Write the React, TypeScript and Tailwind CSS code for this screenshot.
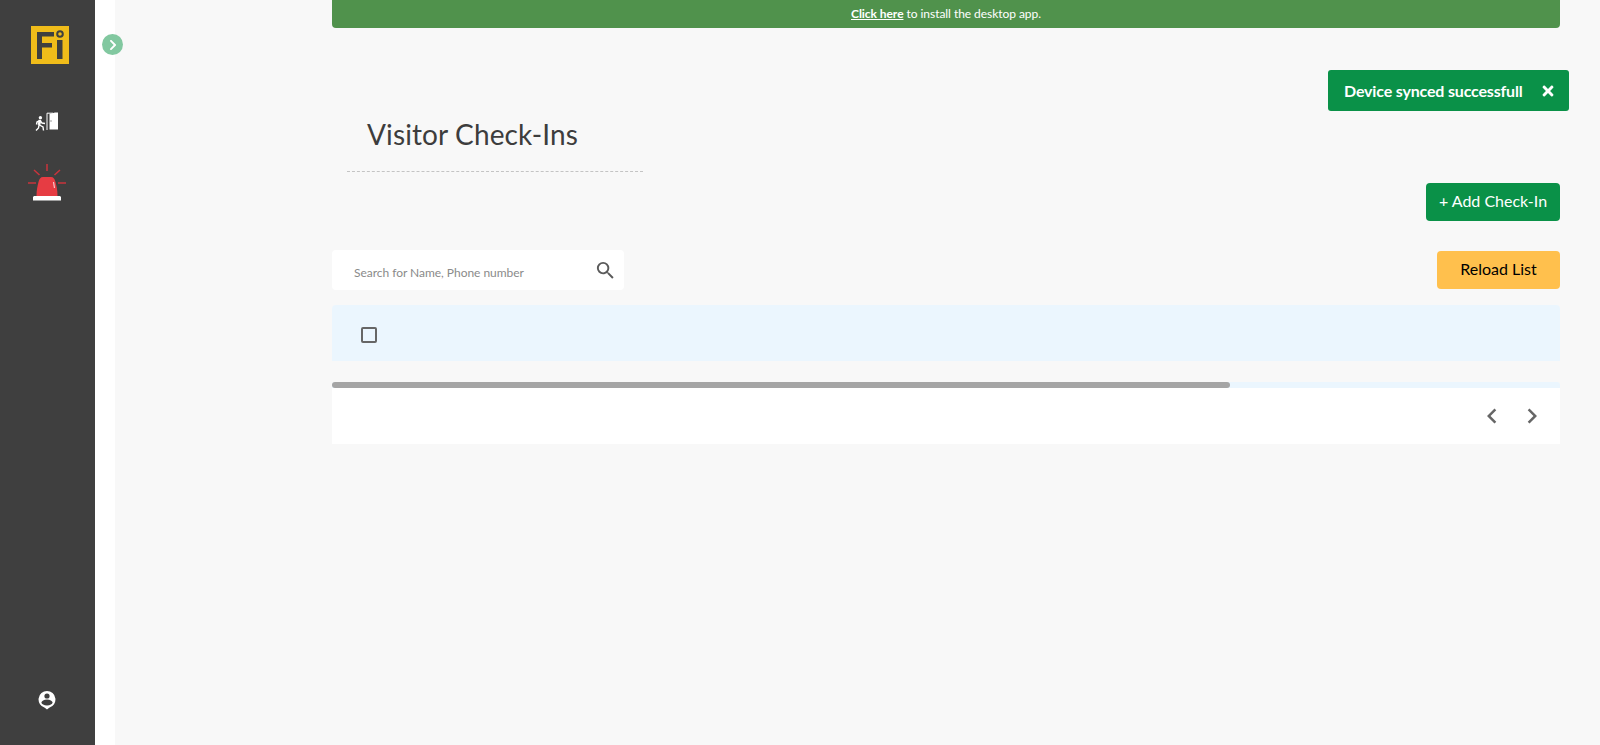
import React from "react";
import { MdChevronLeft, MdChevronRight, MdSearch } from "react-icons/md";
import { FaChevronRight, FaTimes } from "react-icons/fa";

const Logo = () => (
  <svg width="38" height="38" viewBox="0 0 38 38" className="block">
    <rect width="38" height="38" fill="#f0bc1a" />
    <path d="M6 6h17v4.500H11v6.500h10v4.500H11V33H6z" fill="#3f3f3f" />
    <rect x="26" y="14" width="5.500" height="19" fill="#3f3f3f" />
    <circle cx="29" cy="8" r="2.800" fill="none" stroke="#3f3f3f" strokeWidth="2" />
  </svg>
);

const ExitIcon = () => (
  <svg width="24" height="19" viewBox="0 0 24 19" className="block">
    <path d="M14.500 2 20 .5h3v17h-8.500z" fill="#fff" />
    <path d="M12 18V1.200h6" stroke="#fff" strokeWidth="1" fill="none" />
    <rect x="15.500" y="8.500" width="1" height="1" fill="#3f3f3f" />
    <circle cx="5.400" cy="5.800" r="1.700" fill="#fff" />
    <path d="M5 8 4 13" stroke="#fff" strokeWidth="2.600" fill="none" />
    <path
      d="M5 8.500 2 10l-.5 2.500M5 8.500l2 2.500 3 .5M4 13l-.5 3L1 18.500M4.500 13 8 15l.5 3.500"
      stroke="#fff"
      strokeWidth="1.400"
      fill="none"
    />
  </svg>
);

const AlarmIcon = () => (
  <svg width="40" height="37" viewBox="0 0 40 37" className="block">
    <g stroke="#c9343c" strokeWidth="1.500">
      <path d="M20 0v7M7 6l5.500 5M33 6l-5.500 5M1 19h8M31 19h8" />
    </g>
    <path d="M9.500 32c0-6 1-10 2-14 .6-3 2-5 4.500-5h8c2.500 0 3.900 2 4.500 5 1 4 2 8 2 14z" fill="#e63c43" />
    <path d="M26.500 18l1 6" stroke="#f6c9cb" strokeWidth="1.200" />
    <path d="M7 32h26l1 1v3.500H6V33z" fill="#fff" />
  </svg>
);

const UserIcon = () => (
  <svg width="18" height="20" viewBox="0 0 18 20" className="block">
    <path d="M9 1a8.500 8.500 0 0 1 2.200 16.700L9 19.500l-2.200-1.800A8.500 8.500 0 0 1 9 1z" fill="#fff" />
    <circle cx="9" cy="6" r="2.600" fill="#3f3f3f" />
    <ellipse cx="9" cy="12.500" rx="5.500" ry="3" fill="#3f3f3f" />
  </svg>
);

export default function App() {
  return (
    <div className="relative flex h-[745px] overflow-hidden bg-[#f8f8f8] font-['Lato',sans-serif] text-[#3d3d3d]">
      {/* left nav */}
      <aside className="flex w-[95px] flex-none flex-col items-center bg-[#3f3f3f] pt-[26px] pb-[35px]">
        <div className="ml-[5px]">
          <Logo />
        </div>
        <div className="mt-[48px] mr-[1px]">
          <ExitIcon />
        </div>
        <div className="mt-[33px] mr-[1px]">
          <AlarmIcon />
        </div>
        <div className="mt-auto mr-[1px]">
          <UserIcon />
        </div>
      </aside>

      {/* collapsed sub menu */}
      <div className="relative w-[20px] flex-none bg-white">
        <button className="absolute top-[34px] left-[7px] flex h-[21px] w-[21px] items-center justify-center rounded-full bg-[#82c8a0] text-white">
          <FaChevronRight size={12} />
        </button>
      </div>

      <main className="ml-[217px] mr-[40px] flex min-w-0 flex-1 flex-col">
        <div className="flex h-[28px] flex-none items-center justify-center rounded-b-[4px] bg-[#50924c] text-[12px] tracking-[-0.05px] text-white">
          <span>
            <a className="font-bold underline">Click here</a> to install the desktop app.
          </span>
        </div>

        <div className="mt-[87px] ml-[15px] w-[296px] border-b border-dashed border-[#c4c4c4] pl-[20px] pb-[18px]">
          <h1 className="text-[28px] leading-[38px] font-normal tracking-[0.12px]">Visitor Check-Ins</h1>
        </div>

        <div className="mt-[11px] flex justify-end">
          <button className="h-[38px] w-[134px] rounded-[4px] bg-[#0a9148] pb-[2px] text-[16px] text-white">+ Add Check-In</button>
        </div>

        <div className="mt-[29px] flex items-center justify-between">
          <div className="flex h-[40px] w-[292px] items-center justify-between rounded-[4px] bg-white pl-[22px] pr-[7px]">
            <span className="pt-[5px] text-[12px] tracking-[-0.03px] text-[#8a8a8a]">Search for Name, Phone number</span>
            <MdSearch size={23} className="text-[#5a5a5a]" />
          </div>
          <button className="h-[38px] w-[123px] rounded-[4px] bg-[#ffc04d] pb-[2px] text-[16px] text-black">Reload List</button>
        </div>

        <div className="mt-[15px] flex h-[56px] items-center rounded-t-[4px] bg-[#ebf6fe] pl-[29px]">
          <span className="mt-[3px] h-[16px] w-[16px] rounded-[2px] border-2 border-[#666]" />
        </div>

        <div className="mt-[21px] h-[6px] rounded-t-[3px] bg-[#ebf6fe]">
          <div className="h-full w-[898px] rounded-[3px] bg-[#a5a5a5]" />
        </div>

        <div className="flex h-[56px] items-center justify-end gap-[10px] bg-white pr-[13px] text-[#666]">
          <MdChevronLeft size={30} />
          <MdChevronRight size={30} />
        </div>
      </main>

      {/* toast */}
      <div className="absolute top-[70px] left-[1328px] flex h-[41px] w-[241px] items-center justify-between rounded-[3px] bg-[#0a9148] pl-[16px] pr-[13px] text-[16px] font-bold tracking-[-0.17px] text-white">
        <span>Device synced successfull</span>
        <FaTimes size={16} />
      </div>
    </div>
  );
}
